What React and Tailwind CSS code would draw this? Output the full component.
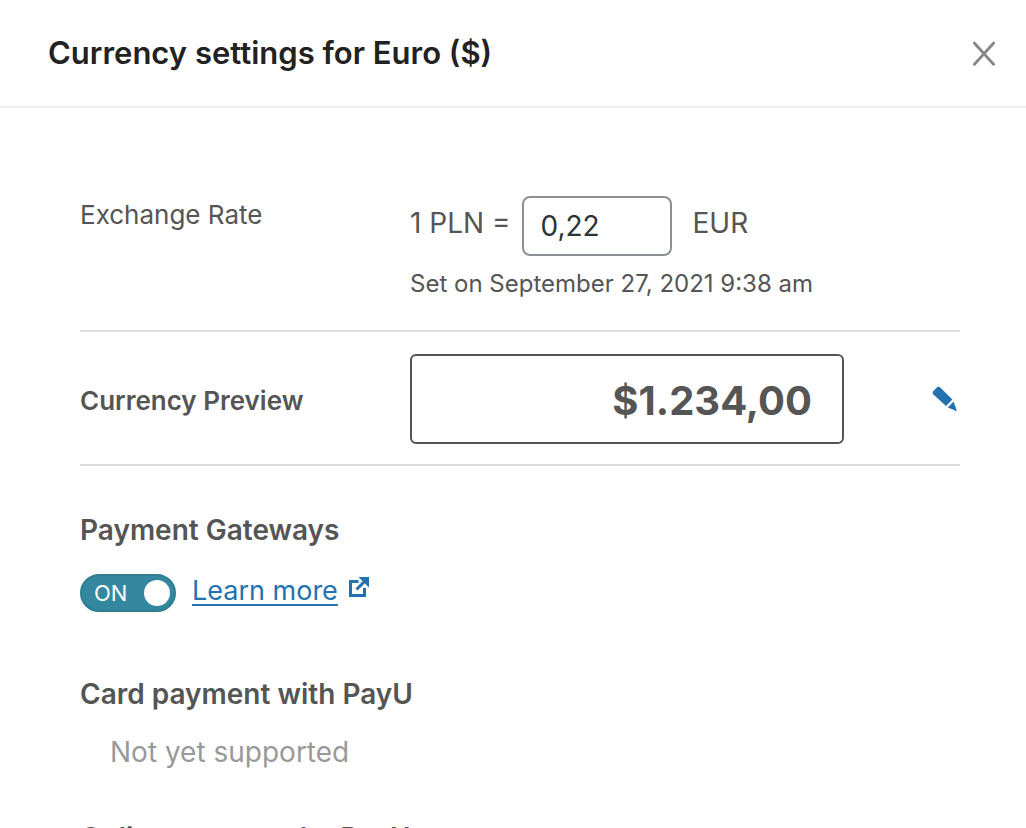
import {useState} from 'react';

const gateways = [
  {id: 'payu-card', title: 'Card payment with PayU', note: 'Not yet supported'},
  {id: 'payu-online', title: 'Online payment by PayU', note: 'Not yet supported'},
];

export default function App() {
  return (
    <div
      role="dialog"
      aria-labelledby="dialog-title"
      className="flex h-screen flex-col overflow-hidden bg-white font-['Inter',sans-serif] text-[#555555]"
    >
      <DialogHeader />
      <main className="min-h-0 flex-1 overflow-hidden pt-[88px] pr-[66px] pl-20">
        <ExchangeRate />
        <CurrencyPreview />
        <PaymentGateways />
      </main>
    </div>
  );
}

function DialogHeader() {
  return (
    <header className="flex shrink-0 items-center justify-between border-b-2 border-[#f0f0f0] py-8 pr-[30px] pl-12">
      <h1 id="dialog-title" className="text-[31px] leading-[42px] font-semibold text-[#222222]">
        Currency settings for Euro ($)
      </h1>
      <button type="button" aria-label="Close" className="text-[#858585]">
        <svg viewBox="0 0 24 26" className="h-[26px] w-6" fill="none" stroke="currentColor" strokeWidth="2.8">
          <path d="M1.6 2.2 22.4 25.2M22.4 2.2 1.6 25.2" />
        </svg>
      </button>
    </header>
  );
}

function ExchangeRate() {
  const [rate, setRate] = useState('0,22');

  return (
    <section className="flex border-b-2 border-[#dddddd] pb-[30px]">
      <label htmlFor="rate" className="w-[330px] shrink-0 text-[26px] leading-[38px]">
        Exchange Rate
      </label>
      <div>
        <div className="flex items-start text-[28px] leading-[54px]">
          <span>1 PLN =</span>
          <input
            id="rate"
            type="text"
            value={rate}
            onChange={(e) => setRate(e.target.value)}
            className="mr-5 ml-3 h-[60px] w-[150px] rounded-lg border-2 border-[#8c8f94] px-4 text-[28px] text-[#2c3338]"
          />
          <span>EUR</span>
        </div>
        <p className="mt-3 text-[24px] leading-8">Set on September 27, 2021 9:38 am</p>
      </div>
    </section>
  );
}

function CurrencyPreview() {
  return (
    <section className="flex items-center border-b-2 border-[#dddddd] pt-[22px] pb-5">
      <h2 className="w-[330px] shrink-0 pt-1 text-[26px] leading-10 font-semibold">Currency Preview</h2>
      <div className="mr-[88px] flex h-[90px] flex-1 items-center justify-end rounded-md border-2 border-[#555555] px-[30px] pt-1 text-[40px] font-bold">
        $1.234,00
      </div>
      <button type="button" aria-label="Edit currency format" className="mr-[2px] text-[#2271b1]">
        <svg viewBox="0 0 26 26" className="size-[26px]" fill="currentColor">
          <path d="M1.3 5.2 5.4 1.1Q6.8 .2 8 1.3L20.4 13.6 14 20 1.2 8.2Q.1 6.7 1.3 5.2Z" />
          <path d="M21.6 15.6 25 25.2 15.8 21.6Z" />
        </svg>
      </button>
    </section>
  );
}

function PaymentGateways() {
  const [enabled, setEnabled] = useState(true);

  return (
    <section className="pt-11 text-[28px] leading-10">
      <h2 className="font-semibold">Payment Gateways</h2>
      <div className="mt-[22px] flex items-start gap-4">
        <button
          type="button"
          role="switch"
          aria-checked={enabled}
          aria-label="Payment gateways"
          onClick={() => setEnabled(!enabled)}
          className="mt-[2px] flex h-[38px] w-24 items-center justify-between rounded-full border-2 border-[#2f7f90] bg-[#33879e] pr-1 pl-3 text-[22px] leading-none text-white"
        >
          <span>{enabled ? 'ON' : 'OFF'}</span>
          <span className="size-[26px] rounded-full bg-white" />
        </button>
        <a href="#learn-more" className="flex items-center gap-[10px] text-[27px] leading-[38px] text-[#2271b1]">
          <span className="underline decoration-2 underline-offset-4">Learn more</span>
          <svg viewBox="0 0 22 22" className="mb-2 size-[22px]" fill="none" stroke="currentColor" strokeWidth="3">
            <path d="M10.5 5.5H2.5V19.5H16.5V12" />
            <path d="M8.5 13.5 18 4" />
            <path d="M10.5 1H21V11.5Z" fill="currentColor" stroke="none" />
          </svg>
        </a>
      </div>
      <ul className="mt-[62px] flex flex-col gap-[46px]">
        {gateways.map((gateway) => (
          <li key={gateway.id}>
            <h3 className="font-semibold">{gateway.title}</h3>
            <p className="mt-[18px] pl-[30px] text-[#999999]">{gateway.note}</p>
          </li>
        ))}
      </ul>
    </section>
  );
}
